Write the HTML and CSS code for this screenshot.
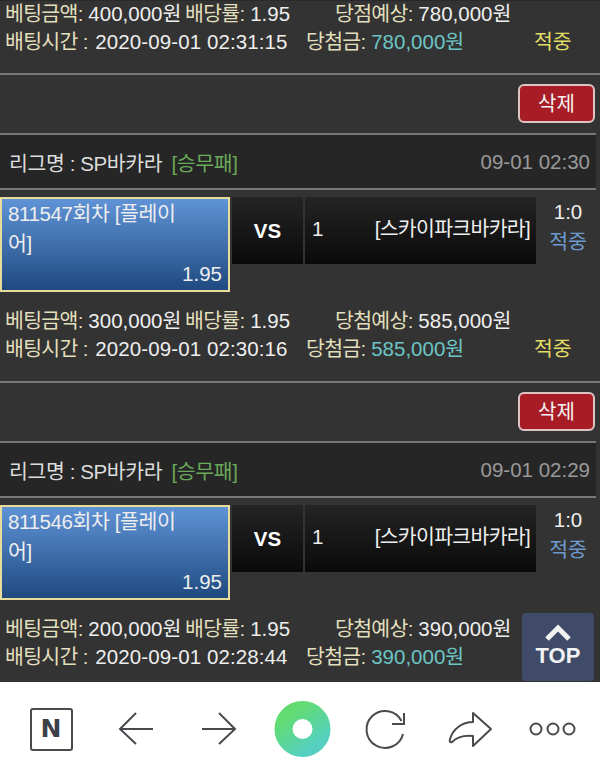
FILE: index.html
```html
<!DOCTYPE html>
<html lang="ko">
<head>
  <meta charset="UTF-8">
  <meta name="viewport" content="width=device-width, initial-scale=1.0">
  <title>배팅내역</title>
  <link rel="stylesheet" href="styles.css">
</head>
<body>
  <main class="feed">
    <!-- 잘린 첫번째 내역 -->
    <div class="info info-first">
      <div class="info-row">
        <div class="info-left"><span class="label">베팅금액:</span> 400,000원 <span class="label label-odds">배당률:</span> 1.95</div>
        <div class="info-expect"><span class="label">당점예상:</span> 780,000원</div>
      </div>
      <div class="info-row">
        <div class="info-left"><span class="label label-time">배팅시간 :</span> <span class="bet-time">2020-09-01 02:31:15</span></div>
        <div class="info-win"><span class="label">당첨금:</span> <span class="win">780,000원</span></div>
        <div class="status">적중</div>
      </div>
    </div>

    <section class="slip">
      <div class="actions"><button class="btn-delete" type="button">삭제</button></div>
      <div class="league">
        <div class="league-title">리그명 : SP바카라 <span class="market">[승무패]</span></div>
        <div class="league-time">09-01 02:30</div>
      </div>
      <div class="match">
        <div class="pick">
          <div class="pick-name">811547회차 [플레이어]</div>
          <div class="pick-odds">1.95</div>
        </div>
        <div class="vs">VS</div>
        <div class="team"><span>1</span><span>[스카이파크바카라]</span></div>
        <div class="score">
          <div>1:0</div>
          <div class="score-result">적중</div>
        </div>
      </div>
      <div class="info">
        <div class="info-row">
          <div class="info-left"><span class="label">베팅금액:</span> 300,000원 <span class="label label-odds">배당률:</span> 1.95</div>
          <div class="info-expect"><span class="label">당첨예상:</span> 585,000원</div>
        </div>
        <div class="info-row">
          <div class="info-left"><span class="label label-time">배팅시간 :</span> <span class="bet-time">2020-09-01 02:30:16</span></div>
          <div class="info-win"><span class="label">당첨금:</span> <span class="win">585,000원</span></div>
          <div class="status">적중</div>
        </div>
      </div>
    </section>

    <section class="slip">
      <div class="actions"><button class="btn-delete" type="button">삭제</button></div>
      <div class="league">
        <div class="league-title">리그명 : SP바카라 <span class="market">[승무패]</span></div>
        <div class="league-time">09-01 02:29</div>
      </div>
      <div class="match">
        <div class="pick">
          <div class="pick-name">811546회차 [플레이어]</div>
          <div class="pick-odds">1.95</div>
        </div>
        <div class="vs">VS</div>
        <div class="team"><span>1</span><span>[스카이파크바카라]</span></div>
        <div class="score">
          <div>1:0</div>
          <div class="score-result">적중</div>
        </div>
      </div>
      <div class="info">
        <div class="info-row">
          <div class="info-left"><span class="label">베팅금액:</span> 200,000원 <span class="label label-odds">배당률:</span> 1.95</div>
          <div class="info-expect"><span class="label">당첨예상:</span> 390,000원</div>
        </div>
        <div class="info-row">
          <div class="info-left"><span class="label label-time">배팅시간 :</span> <span class="bet-time">2020-09-01 02:28:44</span></div>
          <div class="info-win"><span class="label">당첨금:</span> <span class="win">390,000원</span></div>
        </div>
      </div>
    </section>

    <a class="btn-top" href="#">
      <svg width="26" height="17" viewBox="0 0 26 17"><path d="M2 15 L13 4 L24 15" fill="none" stroke="#f2f2f2" stroke-width="5"/></svg>
      <span class="btn-top-text">TOP</span>
    </a>
  </main>

  <nav class="toolbar">
    <div class="tool tool-n"><span class="n-box">N</span></div>
    <svg class="tool" viewBox="0 0 84 86" fill="none" stroke="#4a4a4e" stroke-width="2">
      <path d="M60 47 H27 M43 31 L27 47 L43 62"/>
    </svg>
    <svg class="tool" viewBox="0 0 84 86" fill="none" stroke="#4a4a4e" stroke-width="2">
      <path d="M25 47 H58 M42 31 L58 47 L42 62"/>
    </svg>
    <svg class="tool" viewBox="0 0 84 86">
      <defs>
        <linearGradient id="ring" x1="0.2" y1="0.1" x2="0.8" y2="0.95">
          <stop offset="0" stop-color="#62dc72"/>
          <stop offset="1" stop-color="#55d0c0"/>
        </linearGradient>
      </defs>
      <circle cx="41.5" cy="47" r="19" fill="none" stroke="url(#ring)" stroke-width="18"/>
    </svg>
    <svg class="tool" viewBox="0 0 84 86" fill="none" stroke="#4a4a4e" stroke-width="2">
      <path d="M56.5 39 A18.5 18.5 0 1 0 58 52"/>
      <path d="M59 31 V42 H47"/>
    </svg>
    <svg class="tool" viewBox="0 0 84 86" fill="none" stroke="#4a4a4e" stroke-width="2" stroke-linejoin="round">
      <path d="M44 31 L62 47 L44 64 V54 C34 53 28 55 23 60 Q20 61 21 57 C24 47 33 40 44 40 Z"/>
    </svg>
    <svg class="tool" viewBox="0 0 84 86" fill="none" stroke="#4a4a4e" stroke-width="2">
      <circle cx="23" cy="47" r="5.5"/>
      <circle cx="40" cy="47" r="5.5"/>
      <circle cx="56" cy="47" r="5.5"/>
    </svg>
  </nav>
</body>
</html>
```
FILE: styles.css
```css
* {
  box-sizing: border-box;
}

body {
  margin: 0;
  display: flex;
  flex-direction: column;
  height: 768px;
  overflow: hidden;
  background-color: #fff;
  font-family: "Liberation Sans", "Noto Sans CJK KR", Arial, sans-serif;
  font-size: 20.5px;
  color: #eee;
}

.feed {
  position: relative;
  height: 682px;
  overflow: hidden;
  background-color: #333;
  border-top: 1px solid #2a2a2a;
}

.info {
  padding: 15px 0 18px 5px;
  border-bottom: 2px solid #777;
}

.info-first {
  margin-top: -1px;
  padding-top: 0;
  padding-bottom: 17px;
}

.info-row {
  display: flex;
  height: 28px;
  line-height: 28px;
  white-space: nowrap;
}

.info-left {
  width: 301px;
}

.info-expect {
  padding-left: 29px;
}

.info-win {
  width: 228px;
}

.label {
  color: #e2dfbc;
  letter-spacing: -0.7px;
}

.label-odds {
  margin-left: -2px;
}

.label-time {
  margin-right: 2px;
}

.bet-time {
  letter-spacing: 0.1px;
}

.win {
  color: #6cc4c4;
}

.status {
  color: #e2dc66;
}

.actions {
  display: flex;
  justify-content: flex-end;
  height: 58px;
  padding: 9px 5px 0 0;
}

.btn-delete {
  width: 77px;
  height: 39px;
  padding: 0 0 2px;
  background-color: #a81c26;
  border: 2px solid #ddc4c4;
  border-radius: 6px;
  color: #f2f2f2;
  font-family: inherit;
  font-size: 20px;
}

.league {
  display: flex;
  justify-content: space-between;
  align-items: center;
  width: 596px;
  height: 57px;
  padding: 1px 6px 0 9px;
  background-color: #262626;
  border-top: 2px solid #777;
  border-bottom: 2px solid #777;
  color: #ddd;
}

.league-title {
  letter-spacing: -0.4px;
}

.market {
  margin-left: 4px;
  color: #6aa85a;
}

.league-time {
  color: #999;
}

.match {
  display: flex;
  align-items: flex-start;
  margin-top: 7px;
}

.pick {
  display: flex;
  flex-direction: column;
  justify-content: space-between;
  flex: none;
  width: 230px;
  height: 95px;
  padding: 0 6px 4px 6px;
  background: linear-gradient(#5f93d6, #1f4a80);
  border: 2px solid #e8dc9a;
  line-height: 30px;
}

.pick-name {
  width: 180px;
  letter-spacing: -0.4px;
}

.pick-odds {
  text-align: right;
}

.vs,
.team {
  height: 67px;
  background: linear-gradient(#242424, #0a0a0a);
}

.vs {
  flex: none;
  width: 71px;
  margin-left: 2px;
  font-weight: bold;
  line-height: 67px;
  text-align: center;
  color: #fff;
}

.team {
  display: flex;
  justify-content: space-between;
  flex: none;
  width: 231px;
  margin-left: 2px;
  padding: 0 6px 0 7px;
  letter-spacing: -0.7px;
  line-height: 64px;
}

.score {
  flex: 1;
  padding-top: 1px;
  line-height: 28px;
  text-align: center;
}

.score-result {
  padding-top: 2px;
  color: #6d9bd0;
}

.btn-top {
  position: absolute;
  left: 522px;
  top: 612px;
  display: flex;
  flex-direction: column;
  align-items: center;
  width: 72px;
  height: 68px;
  padding-top: 11px;
  background-color: #3f4b69;
  border-radius: 4px;
  color: #f2f2f2;
  font-size: 22px;
  font-weight: bold;
  line-height: 24px;
  text-decoration: none;
}

.btn-top-text {
  margin-top: 3px;
}

.toolbar {
  display: flex;
  flex: 1;
  padding-left: 9px;
  background-color: #fff;
}

.tool {
  flex: none;
  width: 84px;
  height: 86px;
}

.tool-n {
  display: flex;
  justify-content: center;
  padding-top: 26px;
}

.n-box {
  width: 43px;
  height: 43px;
  border: 2px solid #4a4a4e;
  border-radius: 3px;
  color: #3c4048;
  font-family: "DejaVu Sans", sans-serif;
  font-size: 25px;
  font-weight: bold;
  line-height: 38px;
  text-align: center;
}
```
